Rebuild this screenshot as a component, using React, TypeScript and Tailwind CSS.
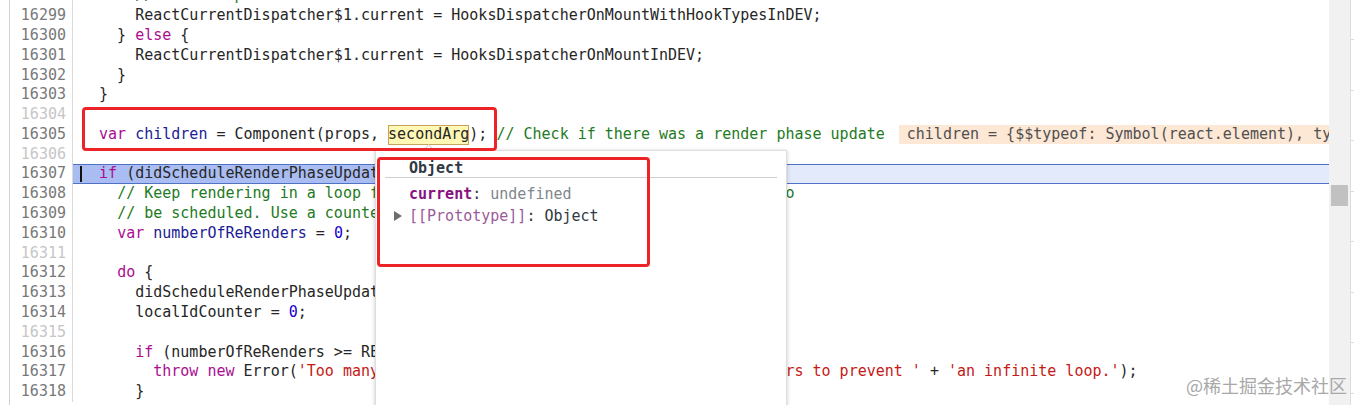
import React from 'react';

type Tok = [string, string?];

const K = 'text-[#aa0d91]';
const D = 'text-[#1c1c96]';
const C = 'text-[#237a24]';
const N = 'text-[#1c00cf]';
const S = 'text-[#c41a16]';

type Line = { n: number; toks: Tok[]; special?: 'decl' | 'active' };

const lines: Line[] = [
  { n: 16298, toks: [['      '], ['// This dispatcher does that.', C]] },
  { n: 16299, toks: [['      ReactCurrentDispatcher$1.current = HooksDispatcherOnMountWithHookTypesInDEV;']] },
  { n: 16300, toks: [['    } '], ['else', K], [' {']] },
  { n: 16301, toks: [['      ReactCurrentDispatcher$1.current = HooksDispatcherOnMountInDEV;']] },
  { n: 16302, toks: [['    }']] },
  { n: 16303, toks: [['  }']] },
  { n: 16304, toks: [] },
  { n: 16305, toks: [], special: 'decl' },
  { n: 16306, toks: [] },
  { n: 16307, toks: [['  '], ['if', K], [' (didScheduleRenderPhaseUpdateDuringThisPass) {']], special: 'active' },
  { n: 16308, toks: [['    '], ['// Keep rendering in a loop for as long as render phase updates continue to', C]] },
  { n: 16309, toks: [['    '], ['// be scheduled. Use a counter to prevent infinite loops.', C]] },
  { n: 16310, toks: [['    '], ['var', K], [' '], ['numberOfReRenders', D], [' = '], ['0', N], [';']] },
  { n: 16311, toks: [] },
  { n: 16312, toks: [['    '], ['do', K], [' {']] },
  { n: 16313, toks: [['      didScheduleRenderPhaseUpdateDuringThisPass = '], ['false', K], [';']] },
  { n: 16314, toks: [['      localIdCounter = '], ['0', N], [';']] },
  { n: 16315, toks: [] },
  { n: 16316, toks: [['      '], ['if', K], [' (numberOfReRenders >= RE_RENDER_LIMIT) {']] },
  {
    n: 16317,
    toks: [
      ['        '],
      ['throw', K],
      [' '],
      ['new', K],
      [' Error('],
      ["'Too many re-renders. React limits the number of renders to prevent '", S],
      [' + '],
      ["'an infinite loop.'", S],
      [');'],
    ],
  },
  { n: 16318, toks: [['      }']] },
];

function Toks({ toks }: { toks: Tok[] }) {
  return (
    <>
      {toks.map((t, i) => (
        <span key={i} className={t[1] ?? ''}>
          {t[0]}
        </span>
      ))}
    </>
  );
}

function DeclLine() {
  return (
    <>
      <span>{'  '}</span>
      <span className={K}>var</span>
      <span> </span>
      <span className={D}>children</span>
      <span>{' = Component(props, '}</span>
      <span className="inline-block h-[20px] align-top bg-[#fff7b4] outline outline-1 -outline-offset-1 outline-[#c9a25c]">secondArg</span>
      <span>{'); '}</span>
      <span className={C}>// Check if there was a render phase update</span>
      <span className="ml-[14px] inline-block h-[19px] align-top pl-[8px] pr-[4px] bg-[#fde7d5] text-[#505050]">
        {'children = {$$typeof: Symbol(react.element), type: ƒ, key: null, ref: null, props: {…}, …}'}
      </span>
    </>
  );
}

export default function App() {
  return (
    <div className="relative w-[1354px] h-[405px] overflow-hidden bg-white font-['DejaVu_Sans_Mono',monospace] text-[15px] text-[#262626]">
      <div className="flex h-full">
        <div className="w-[10px] h-full border-r border-[#d2d2d2] bg-white" />
        <div className="w-[1319px] h-full overflow-hidden">
          <div className="mt-[-13.7px] flex flex-col">
            {lines.map((l) => {
              const empty = l.toks.length === 0 && !l.special;
              return (
                <div key={l.n} className="flex h-[19.8px] leading-[19.8px]">
                  <div
                    className={`w-[63px] shrink-0 border-r border-[#dadada] pr-[6px] text-right ${
                      empty ? 'text-[#c6c6c6]' : 'text-[#787878]'
                    }`}
                  >
                    {l.n}
                  </div>
                  <div
                    className={`relative flex-1 overflow-hidden whitespace-pre pl-[8px] ${
                      l.special === 'active'
                        ? 'bg-[linear-gradient(to_right,#aabdf3_0px,#aabdf3_420px,#e3eafc_420px)] shadow-[inset_0_1px_0_#4f72c6,inset_0_-1px_0_#4f72c6]'
                        : ''
                    }`}
                  >
                    {l.special === 'active' && (
                      <span className="absolute left-[7px] top-[2px] h-[16px] w-[1.5px] bg-[#111]" />
                    )}
                    {l.special === 'decl' ? <DeclLine /> : <Toks toks={l.toks} />}
                  </div>
                </div>
              );
            })}
          </div>
        </div>
        <div className="w-[21px] h-full bg-[#f1f1f1] pl-[2px] pr-[2px]">
          <div className="mt-[185px] h-[21px] bg-[#c1c1c1]" />
        </div>
        <div className="w-[4px] h-full border-l border-[#dcdcdc] flex flex-col">
          <div className="h-[40px] shrink-0 border-b border-[#dcdcdc]" />
          <div className="h-[50.5px] shrink-0 border-b border-[#dcdcdc]" />
          <div className="h-[50.5px] shrink-0 border-b border-[#dcdcdc]" />
          <div className="h-[50.5px] shrink-0 border-b border-[#dcdcdc]" />
          <div className="h-[50.5px] shrink-0 border-b border-[#dcdcdc]" />
          <div className="h-[50.5px] shrink-0 border-b border-[#dcdcdc]" />
          <div className="h-[50.5px] shrink-0 border-b border-[#dcdcdc]" />
          <div className="h-[50.5px] shrink-0 border-b border-[#dcdcdc]" />
        </div>
      </div>

      {/* popover arrow */}
      <div className="absolute left-[424px] top-[146px] h-[9px] w-[9px] rotate-45 border-l border-t border-[#d4d4d4] bg-white" />

      {/* popover */}
      <div className="absolute left-[375px] top-[150px] h-[270px] w-[412px] border border-[#dedede] bg-white shadow-[0_1px_4px_rgba(0,0,0,0.22)]">
        <div className="mx-[9px]">
          <div className="h-[27px] border-b border-[#cfcfcf] pl-[24px] pt-[7px] leading-[20px] font-bold text-[#303942]">
            Object
          </div>
          <div className="mt-[5px] flex flex-col">
            <div className="flex h-[22px] leading-[22px]">
              <span className="w-[24px] shrink-0" />
              <span className="font-bold text-[#881280]">current</span>
              <span className="text-[#303942]">:&nbsp;</span>
              <span className="text-[#80868b]">undefined</span>
            </div>
            <div className="flex h-[22px] leading-[22px]">
              <span className="flex w-[24px] shrink-0 items-center pl-[9px]">
                <svg width="8" height="10" viewBox="0 0 8 10">
                  <path d="M0 0 L8 5 L0 10 Z" fill="#6e6e6e" />
                </svg>
              </span>
              <span className="text-[#9b5b9b]">[[Prototype]]</span>
              <span className="text-[#303942]">:&nbsp;Object</span>
            </div>
          </div>
        </div>
      </div>

      {/* red annotation boxes */}
      <div className="absolute left-[82px] top-[107px] h-[44px] w-[415px] rounded-[4px] border-[3px] border-[#ec2428]" />
      <div className="absolute left-[377px] top-[157px] h-[110px] w-[273px] rounded-[4px] border-[3px] border-[#ec2428]" />

      {/* watermark */}
      <div className="absolute left-[1186px] top-[373px] font-['Noto_Sans_CJK_SC',sans-serif] text-[18px] leading-[24px] text-[#a8a8a8]">
        @稀土掘金技术社区
      </div>
    </div>
  );
}
